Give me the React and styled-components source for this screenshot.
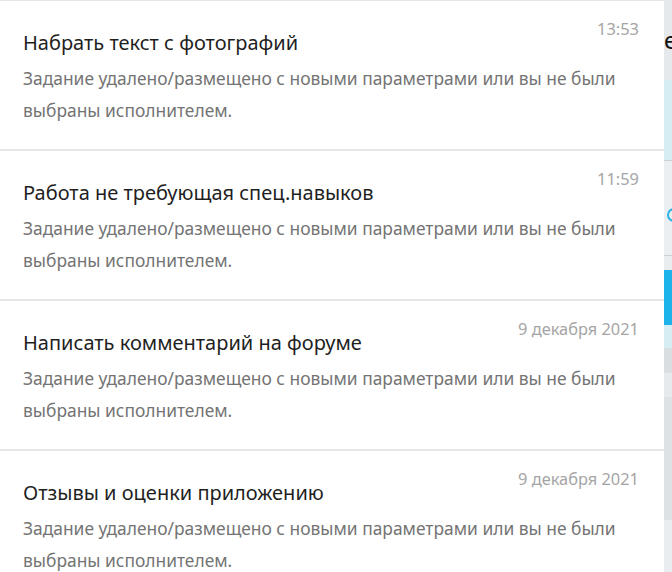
import React from "react";
import styled, { createGlobalStyle } from "styled-components";

const Global = createGlobalStyle`
  html, body { margin: 0; padding: 0; background: #e6e9eb; }
  body { font-family: "Noto Sans", "Open Sans", sans-serif; }
`;

const Page = styled.div`
  display: flex;
  width: 672px;
  height: 572px;
  overflow: hidden;
`;

const Panel = styled.div`
  width: 664px;
  flex: none;
  background: #fff;
  border-top: 1px solid #e3e6e8;
`;

const Row = styled.div`
  height: 150px;
  box-sizing: border-box;
  padding: 17px 25px 0 23px;
  border-bottom: 2px solid #e6e6e6;
`;

const Time = styled.div`
  text-align: right;
  font-size: 16.4px;
  line-height: 22px;
  color: #a5a5a5;
  height: 22px;
`;

const Title = styled.div`
  margin-top: -11px;
  font-size: 20px;
  line-height: 28px;
  color: #1f1f1f;
`;

const Desc = styled.div`
  margin-top: 5px;
  font-size: 17.4px;
  line-height: 32px;
  color: #747474;
`;

const Backdrop = styled.div`
  flex: 1;
  display: flex;
  flex-direction: column;
  overflow: hidden;
`;

const Block = styled.div`
  flex: none;
  height: ${(p) => p.$h}px;
  background: ${(p) => p.$bg};
  border-top: ${(p) => (p.$line ? "1px solid #c9d2d6" : "none")};
  box-sizing: border-box;
  position: relative;
  overflow: hidden;
`;

const Letter = styled.span`
  position: absolute;
  left: 0;
  top: 26px;
  font-size: 24px;
  line-height: 28px;
  color: #111;
`;

const Dot = styled.span`
  position: absolute;
  left: 3px;
  top: 47px;
  width: 10px;
  height: 10px;
  border: 2px solid #2ab4e6;
  border-radius: 50%;
`;

const items = [
  { time: "13:53", title: "Набрать текст с фотографий" },
  { time: "11:59", title: "Работа не требующая спец.навыков" },
  { time: "9 декабря 2021", title: "Написать комментарий на форуме" },
  { time: "9 декабря 2021", title: "Отзывы и оценки приложению" },
];

export default function App() {
  return (
    <>
      <Global />
      <Page>
        <Panel>
          {items.map((it, i) => (
            <Row key={i}>
              <Time>{it.time}</Time>
              <Title>{it.title}</Title>
              <Desc>
                Задание удалено/размещено с новыми параметрами или вы не были
                <br />
                выбраны исполнителем.
              </Desc>
            </Row>
          ))}
        </Panel>
        <Backdrop>
          <Block $h={80} $bg="#e6e9eb">
            <Letter>е</Letter>
          </Block>
          <Block $h={80} $bg="#d6edf3" />
          <Block $h={95} $bg="#eceff1" $line>
            <Dot />
          </Block>
          <Block $h={15} $bg="#e9edef" $line />
          <Block $h={55} $bg="#1cb3ea" />
          <Block $h={23} $bg="#d6edf3" />
          <Block $h={25} $bg="#d9dfe1" />
          <Block $h={24} $bg="#e6eaec" />
          <Block $h={123} $bg="#dde2e4" />
          <Block $h={52} $bg="#e9edef" />
        </Backdrop>
      </Page>
    </>
  );
}
